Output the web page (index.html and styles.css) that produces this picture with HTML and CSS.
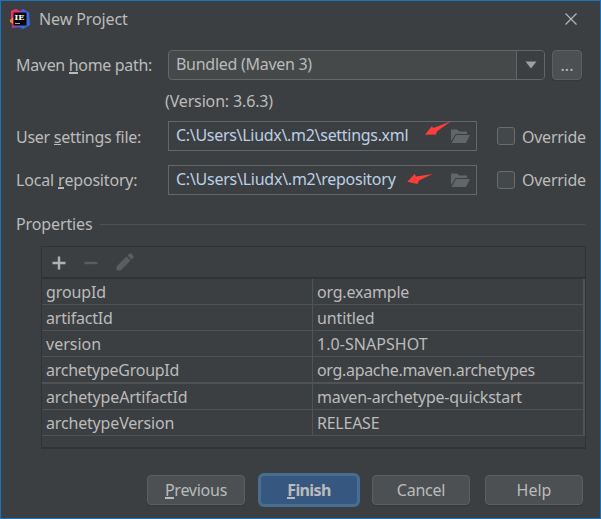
FILE: index.html
```html
<!DOCTYPE html>
<html lang="en">
<head>
<meta charset="utf-8">
<title>New Project</title>
<link rel="stylesheet" href="styles.css">
</head>
<body>
<main class="dialog">
  <header class="titlebar">
    <svg class="logo" width="22" height="22" viewBox="0 0 22 22">
      <defs>
        <linearGradient id="pink" x1="0" y1="0" x2="0.6" y2="1"><stop offset="0" stop-color="#ff2f64"/><stop offset="0.6" stop-color="#e5336f"/><stop offset="1" stop-color="#8b3fd0"/></linearGradient>
        <linearGradient id="blue" x1="0" y1="0" x2="1" y2="1"><stop offset="0" stop-color="#7a45dc"/><stop offset="0.5" stop-color="#3a6ae8"/><stop offset="1" stop-color="#3468df"/></linearGradient>
      </defs>
      <path fill="url(#pink)" d="M2 3L7 1L11 3V19L3 20L3.500 14L2 9Z"/>
      <path fill="#f98325" d="M1 12L4 9V16L1 14Z"/>
      <path fill="url(#blue)" d="M10 4L14 1L20 4.500L21 17L14 21L8 18Z"/>
      <path fill="#080808" d="M4.500 4.500H17.500V17.500H4.500Z"/>
      <path fill="#aaa" d="M6 15H11V16H6Z"/>
      <text class="logo-text" x="5.500" y="12">IE</text>
    </svg>
    <h1 class="title">New Project</h1>
    <svg class="close" width="12" height="12" viewBox="0 0 12 12"><path d="M0.500 0.500L11.500 11.500M11.500 0.500L0.500 11.500" fill="none" stroke="#b4b6b7" stroke-width="1.200"/></svg>
  </header>

  <section class="form">
    <div class="row">
      <span class="label l-home">Maven <u>h</u>ome path:</span>
      <div class="combo"><span class="combo-value">Bundled (Maven 3)</span><span class="combo-arrow"><svg width="12" height="8" viewBox="0 0 12 8"><path fill="#9da0a2" d="M0.500 0.500H11.500L6 7.500Z"/></svg></span></div>
      <button class="button more">...</button>
    </div>
    <p class="version">(Version: 3.6.3)</p>
    <div class="row row-settings">
      <span class="label l-settings">User <u>s</u>ettings file:</span>
      <div class="field"><span class="path p-settings">C:\Users\Liudx\.m2\settings.xml</span>
        <svg class="folder" width="19" height="15" viewBox="0 0 19 15"><path fill="#616669" d="M0 0.500H6L8.500 2.500H16V5H4.500L1.500 10L0 12ZM5 6H19L15 14H0.500Z"/></svg>
        <svg class="mark mark-settings" width="27" height="15" viewBox="0 0 27 15"><path fill="#ff3d3a" d="M0 13.700L6.700 5.300L8.500 7L26.500 0L12 10.300L11 13.500Z"/></svg>
      </div>
      <span class="check"></span><span class="check-label">Override</span>
    </div>
    <div class="row row-repo">
      <span class="label l-repo">Local <u>r</u>epository:</span>
      <div class="field"><span class="path p-repo">C:\Users\Liudx\.m2\repository</span>
        <svg class="folder" width="19" height="15" viewBox="0 0 19 15"><path fill="#616669" d="M0 0.500H6L8.500 2.500H16V5H4.500L1.500 10L0 12ZM5 6H19L15 14H0.500Z"/></svg>
        <svg class="mark mark-repo" width="26" height="11" viewBox="0 0 26 11"><path fill="#ff3d3a" d="M0.300 7.700L7.700 0L9 2.500L25.700 0L12 6.500L10.500 9.900Z"/></svg>
      </div>
      <span class="check"></span><span class="check-label">Override</span>
    </div>
  </section>

  <h2 class="section"><span class="section-text">Properties</span></h2>

  <section class="properties">
    <div class="toolbar">
      <svg width="14" height="14" viewBox="0 0 14 14"><path stroke="#afb1b3" stroke-width="2.400" d="M7 0.500V13.500M0.500 7H13.500"/></svg>
      <svg width="14" height="14" viewBox="0 0 14 14"><path stroke="#5b5d5e" stroke-width="2.400" d="M0.500 7H13.500"/></svg>
      <svg class="pencil" width="18" height="18" viewBox="0 0 18 18"><path fill="#5b5d5e" d="M0.500 13.500L10.500 3.500L14.500 7.500L4.500 17.500H0.500ZM11.500 2.500L13.500 0.500H15L17.500 3V4.500L15.500 6.500Z"/></svg>
    </div>
    <div class="table">
      <div class="tr"><span class="k k1">groupId</span><span class="v v1">org.example</span></div>
      <div class="tr"><span class="k k2">artifactId</span><span class="v v2">untitled</span></div>
      <div class="tr"><span class="k k3">version</span><span class="v v3">1.0-SNAPSHOT</span></div>
      <div class="tr thick"><span class="k k4">archetypeGroupId</span><span class="v v4">org.apache.maven.archetypes</span></div>
      <div class="tr"><span class="k k5">archetypeArtifactId</span><span class="v v5">maven-archetype-quickstart</span></div>
      <div class="tr"><span class="k k6">archetypeVersion</span><span class="v v6">RELEASE</span></div>
    </div>
  </section>

  <footer class="actions">
    <button class="button"><span class="b-prev"><u>P</u>revious</span></button>
    <button class="button primary"><span class="b-finish"><u>F</u>inish</span></button>
    <button class="button cancel"><span class="b-cancel">Cancel</span></button>
    <button class="button help"><span class="b-help">Help</span></button>
  </footer>
</main>
</body>
</html>
```
FILE: styles.css
```css
* { box-sizing: border-box; }
body { margin: 0; background: #3c3f41; color: #bbb; font: 16px/20px "Noto Sans", sans-serif; }
h1, h2, p { margin: 0; font-size: inherit; font-weight: 400; }
svg { display: block; flex: none; }
u { text-decoration: none; display: inline-block; height: 20px; line-height: 20px; background: linear-gradient(#bbb, #bbb) 0 17px / 100% 2px no-repeat; }
.dialog { width: 601px; height: 519px; border: 1px solid #1874bc; display: flex; flex-direction: column; overflow: hidden; white-space: nowrap; }
.titlebar { height: 49px; display: flex; align-items: flex-start; padding: 7px 23px 0 8px; }
.title { margin: 1px auto 0 8px; letter-spacing: -0.1px; }
.logo-text { font: bold 8px "DejaVu Serif", serif; fill: #fff; }
.close { margin-top: 5px; }
.form { padding-left: 15px; }
.row { display: flex; align-items: center; height: 30px; }
.label { width: 152px; flex: none; }
.l-home { letter-spacing: -0.33px; }
.l-settings { letter-spacing: -0.27px; padding-top: 1px; }
.l-settings u { background-size: 100% 1px; }
.l-repo { letter-spacing: -0.18px; }
.combo { width: 377px; height: 30px; border: 1px solid #646668; border-radius: 4px; background: #45494a; display: flex; overflow: hidden; }
.combo-value { flex: 1; padding: 3px 0 0 7px; letter-spacing: -0.28px; }
.combo-arrow { width: 28px; border-left: 1px solid #646668; background: #3c3f41; display: flex; align-items: center; justify-content: center; }
.button { height: 30px; width: 98px; padding: 0; border: 1px solid #5e6060; border-radius: 4px; background: #4c5052; box-shadow: 0 1px 1px #353739; color: #bbb; font: inherit; }
.more { width: 30px; margin-left: 7px; }
.version { margin: 11px 0 10px 149px; letter-spacing: -0.15px; }
.row-repo { margin-top: 14px; }
.field { position: relative; width: 309px; height: 30px; border: 1px solid #646668; display: flex; align-items: center; justify-content: space-between; padding: 0 6px 0 7px; color: #bbd0e6; }
.path { margin-top: -3px; }
.p-settings { letter-spacing: -0.3px; }
.p-repo { letter-spacing: -0.25px; }
.mark { position: absolute; }
.mark-settings { left: 256px; top: -1px; }
.mark-repo { left: 238px; top: 8px; }
.check { width: 18px; height: 18px; margin-left: 20px; border: 1px solid #6b6b6b; border-radius: 3px; background: #43494a; }
.check-label { margin-left: 7px; letter-spacing: -0.25px; }
.row-settings .check-label { padding-top: 1px; }
.section { display: flex; align-items: center; margin: 19px 15px 0; height: 20px; }
.section-text { letter-spacing: -0.12px; }
.section::after { content: ""; flex: 1; height: 1px; margin-left: 7px; background: #515151; }
.properties { margin: 12px 14px 0 40px; height: 203px; border: 1px solid #323232; border-bottom-width: 2px; }
.toolbar { height: 32px; border-bottom: 2px solid #323232; display: flex; align-items: center; gap: 18px; padding: 2px 0 0 10px; }
.pencil { margin-top: -2px; }
.table { border-right: 2px solid #505254; }
.tr { display: flex; height: 26px; border-bottom: 1px solid #505254; }
.thick { height: 27px; border-bottom-width: 2px; }
.k { width: 271px; border-right: 1px solid #505254; padding: 3px 0 0 4px; }
.v { padding: 3px 0 0 4px; }
.k1, .v2 { letter-spacing: -0.12px; }
.k2, .v1 { letter-spacing: -0.2px; }
.v3 { letter-spacing: 0.05px; }
.k4 { letter-spacing: -0.26px; }
.k5, .k6 { letter-spacing: -0.17px; }
.v4 { letter-spacing: -0.32px; }
.v5 { letter-spacing: -0.23px; }
.v6 { letter-spacing: -0.25px; }
.actions { display: flex; margin: 26px 0 0 146px; gap: 15px; }
.primary { background: #365880; border-color: #4c708c; box-shadow: 0 0 0 2px #466d94; font-weight: 700; }
.cancel { margin-left: -1px; }
.b-prev { letter-spacing: -0.25px; }
.b-finish { letter-spacing: -0.65px; }
.b-cancel { letter-spacing: -0.25px; }
```
